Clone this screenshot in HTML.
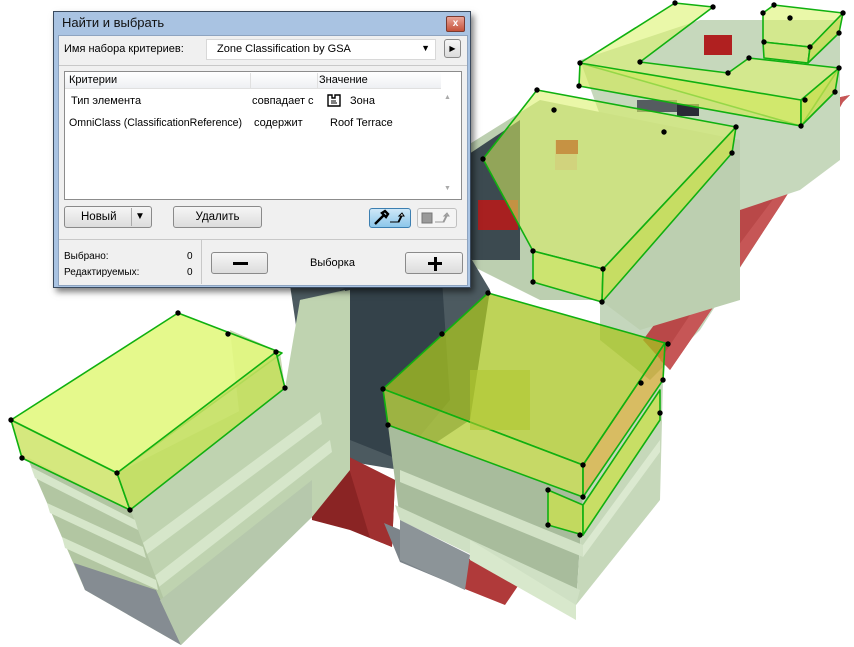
<!DOCTYPE html>
<html><head><meta charset="utf-8">
<style>
html,body{margin:0;padding:0;background:#fff;}
body{width:854px;height:647px;position:relative;overflow:hidden;font-family:"Liberation Sans",sans-serif;}
svg.scene{position:absolute;left:0;top:0;}
.dlg{position:absolute;left:53px;top:11px;width:418px;height:277px;background:#a9c3e2;border:1px solid #3a4a5e;box-shadow:3px 4px 6px rgba(0,0,0,.5);box-sizing:border-box;}
.title{position:absolute;left:8px;top:3px;font-size:13px;color:#111;}
.xbtn{position:absolute;right:5px;top:4px;width:17px;height:14px;background:linear-gradient(#e9a598,#c5523a);border:1px solid #7a3a30;border-radius:2px;color:#fff;font-size:10px;text-align:center;line-height:13px;font-weight:bold;}
.client{position:absolute;left:4px;top:23px;width:408px;height:249px;background:#f0f0f0;border:1px solid #8ea4c0;font-size:11px;color:#000;}
.abs{position:absolute;}
.btn{position:absolute;background:linear-gradient(#f6f6f6,#dcdcdc);border:1px solid #8a8a8a;border-radius:3px;box-sizing:border-box;text-align:center;font-size:11.5px;}
.dot{fill:#000;}
</style></head><body>
<svg class="scene" width="854" height="647" viewBox="0 0 854 647">
<!-- right extension: light green stacks + red strip -->
<polygon points="600,300 800,110 830,100 840,110 790,190 700,330 650,380 600,340" fill="#c4d6bc"/>
<polygon points="740,180 830,110 820,150 760,210" fill="#d6c4b4" opacity="0.8"/>
<polygon points="827,100 850,95 843,102 817,147 782,203 727,287 670,370 643,340 687,280 727,207" fill="#b94848"/>
<polygon points="827,100 850,95 843,102 817,147 782,203 727,287 670,370 660,360 720,270 780,190" fill="#c65656"/>
<rect x="687" y="262" width="38" height="28" fill="#a01818"/>
<!-- upper right cluster base -->
<polygon points="580,60 700,20 840,20 840,160 800,190 740,210 620,170" fill="#c6d8bc"/>
<rect x="704" y="35" width="28" height="20" fill="#b02020"/>
<rect x="637" y="100" width="40" height="12" fill="#555c60"/>
<rect x="677" y="104" width="22" height="12" fill="#2a2a36"/>
<!-- middle region behind long box -->
<polygon points="460,150 540,100 740,140 740,300 640,330 600,300 540,300 460,260" fill="#bccfb0"/>
<polygon points="460,160 520,120 520,260 460,260" fill="#3c4a50"/>
<rect x="555" y="140" width="22" height="30" fill="#c8b0a0"/>
<rect x="556" y="140" width="22" height="14" fill="#b02020"/>
<rect x="478" y="200" width="40" height="30" fill="#a82020"/>
<!-- dark core -->
<polygon points="290,285 460,240 490,290 470,420 440,440 400,470 340,460 310,420" fill="#4c5a60"/>
<polygon points="340,290 440,250 450,400 400,460 350,440" fill="#34424a"/>
<polygon points="300,300 345,290 350,470 312,517 290,500" fill="#aabfa0"/>
<!-- red lower strip + gray -->
<polygon points="310,485 345,455 395,480 392,547 350,530 312,520" fill="#8a2424"/>
<polygon points="345,455 395,480 392,547 370,538" fill="#a03030"/>
<polygon points="384,523 455,553 455,585 400,562" fill="#7c848a"/>
<polygon points="455,553 522,580 505,605 455,585" fill="#b03a3a"/>
<!-- right body under central box -->
<polygon points="388,425 583,497 576,605 400,520" fill="#a8bc9c"/>
<polygon points="583,497 663,380 660,500 576,605" fill="#c6d8ba"/>
<polygon points="400,470 583,545 583,557 400,482" fill="#d2e2c6"/>
<polygon points="395,505 580,590 576,605 400,520" fill="#cfe0c4"/>
<polygon points="583,545 660,440 660,452 583,557" fill="#dbe9d0"/>
<polygon points="400,520 470,555 465,590 400,560" fill="#8c9498"/>
<polygon points="470,540 576,605 576,620 470,560" fill="#d8e8cc"/>
<!-- left wing body -->
<polygon points="117,473 285,388 300,300 350,290 350,470 312,517 181,645 130,510" fill="#bfd3b0"/>
<polygon points="140,545 320,412 322,424 143,557" fill="#d6e6ca"/>
<polygon points="152,578 330,440 332,452 155,590" fill="#d6e6ca"/>
<polygon points="27,457 131,511 181,645 85,590" fill="#b2c6a2"/>
<polygon points="31,467 135,520 138,530 35,478" fill="#d6e6ca"/>
<polygon points="47,503 143,547 146,558 50,513" fill="#d6e6ca"/>
<polygon points="62,537 156,580 158,590 65,548" fill="#d6e6ca"/>
<polygon points="74,563 156,590 181,645 85,590" fill="#858c92"/>
<polygon points="160,600 312,480 312,517 181,645" fill="#b6c8ac"/>
<polygon points="230,330 280,352 285,388 240,420" fill="#c8d8b0"/>
<!-- left yellow box -->
<g stroke="#10b010" stroke-width="1.6" stroke-linejoin="round">
<polygon points="11,420 178,313 282,353 117,473" fill="#e2f880" fill-opacity="0.9"/>
<polygon points="11,420 117,473 130,510 22,458" fill="#d0e670" fill-opacity="0.9"/>
<polygon points="117,473 276,352 285,388 130,510" fill="#c4e060" fill-opacity="0.9"/>
</g>
<!-- central yellow box -->
<g stroke="#10b010" stroke-width="1.6" stroke-linejoin="round">
<polygon points="383,389 488,293 665,343 583,465" fill="#a8c420" fill-opacity="0.75"/>
<polygon points="383,389 583,465 583,497 388,425" fill="#b8d040" fill-opacity="0.8"/>
<polygon points="583,465 665,343 663,380 583,497" fill="#c8a020" fill-opacity="0.7"/>
<polygon points="548,490 583,505 583,535 548,525" fill="#c8e050" fill-opacity="0.8"/>
<polygon points="583,505 660,390 660,420 583,535" fill="#c8e050" fill-opacity="0.8"/>
</g>
<rect x="470" y="370" width="60" height="60" fill="#b0c830" opacity="0.6"/>
<!-- middle long box -->
<g stroke="#10b010" stroke-width="1.6" stroke-linejoin="round">
<polygon points="537,90 736,127 603,269 533,251 483,159" fill="#d8f060" fill-opacity="0.55"/>
<polygon points="533,251 603,269 602,302 533,282" fill="#d0e860" fill-opacity="0.8"/>
<polygon points="603,269 736,127 732,153 602,302" fill="#c8e050" fill-opacity="0.8"/>
</g>
<!-- upper boxes -->
<g stroke="#10b010" stroke-width="1.6" stroke-linejoin="round">
<polygon points="580,63 675,3 713,7 640,62 728,73 749,58 839,68 801,126" fill="#dcf470" fill-opacity="0.6"/>
<polygon points="580,63 579,86 801,126 801,100" fill="#d0e860" fill-opacity="0.7"/>
<polygon points="801,100 839,68 835,92 801,126" fill="#c8e050" fill-opacity="0.8"/>
<polygon points="763,13 774,5 843,13 810,47 763,42" fill="#dcf470" fill-opacity="0.6"/>
<polygon points="763,42 810,47 808,63 764,58" fill="#d0e860" fill-opacity="0.7"/>
<polygon points="810,47 843,13 839,33 808,63" fill="#c8e050" fill-opacity="0.8"/>
</g>
<g class="dot">
<circle cx="11" cy="420" r="2.7"/><circle cx="22" cy="458" r="2.7"/><circle cx="178" cy="313" r="2.7"/><circle cx="117" cy="473" r="2.7"/><circle cx="130" cy="510" r="2.7"/><circle cx="228" cy="334" r="2.7"/><circle cx="276" cy="352" r="2.7"/><circle cx="285" cy="388" r="2.7"/>
<circle cx="383" cy="389" r="2.7"/><circle cx="388" cy="425" r="2.7"/><circle cx="442" cy="334" r="2.7"/><circle cx="488" cy="293" r="2.7"/><circle cx="668" cy="344" r="2.7"/><circle cx="583" cy="465" r="2.7"/><circle cx="583" cy="497" r="2.7"/><circle cx="548" cy="490" r="2.7"/><circle cx="548" cy="525" r="2.7"/><circle cx="580" cy="535" r="2.7"/><circle cx="663" cy="380" r="2.7"/><circle cx="660" cy="413" r="2.7"/><circle cx="641" cy="383" r="2.7"/>
<circle cx="537" cy="90" r="2.7"/><circle cx="554" cy="110" r="2.7"/><circle cx="664" cy="132" r="2.7"/><circle cx="736" cy="127" r="2.7"/><circle cx="732" cy="153" r="2.7"/><circle cx="603" cy="269" r="2.7"/><circle cx="602" cy="302" r="2.7"/><circle cx="533" cy="251" r="2.7"/><circle cx="533" cy="282" r="2.7"/><circle cx="483" cy="159" r="2.7"/>
<circle cx="580" cy="63" r="2.7"/><circle cx="579" cy="86" r="2.7"/><circle cx="675" cy="3" r="2.7"/><circle cx="713" cy="7" r="2.7"/><circle cx="640" cy="62" r="2.7"/><circle cx="728" cy="73" r="2.7"/><circle cx="749" cy="58" r="2.7"/><circle cx="839" cy="68" r="2.7"/><circle cx="835" cy="92" r="2.7"/><circle cx="801" cy="126" r="2.7"/><circle cx="805" cy="100" r="2.7"/>
<circle cx="774" cy="5" r="2.7"/><circle cx="763" cy="13" r="2.7"/><circle cx="843" cy="13" r="2.7"/><circle cx="839" cy="33" r="2.7"/><circle cx="790" cy="18" r="2.7"/><circle cx="764" cy="42" r="2.7"/><circle cx="810" cy="47" r="2.7"/>
</g>
</svg>

<div class="dlg">
 <div class="title">Найти и выбрать</div>
 <div class="xbtn">x</div>
 <div class="client">
  <div class="abs" style="left:5px;top:7px;">Имя набора критериев:</div>
  <div class="abs" style="left:147px;top:3px;width:228px;height:19px;background:#fff;border:1px solid #d8d8d8;"><span class="abs" style="left:10px;top:3px;">Zone Classification by GSA</span><span class="abs" style="right:5px;top:3px;font-size:9px;">▼</span></div>
  <div class="btn" style="left:385px;top:3px;width:17px;height:19px;font-size:8px;line-height:17px;">▶</div>
  <div class="abs" style="left:0;top:29px;width:408px;border-top:1px solid #c8c8c8;"></div>
  <div class="abs" style="left:5px;top:35px;width:396px;height:127px;background:#fff;border:1px solid #8c8c8c;">
   <div class="abs" style="left:0;top:0;width:376px;height:16px;background:linear-gradient(#fff,#eef0f3);border-bottom:1px solid #e0e0e0;"></div>
   <div class="abs" style="left:185px;top:1px;height:15px;border-left:1px solid #e0e0e0;"></div>
   <div class="abs" style="left:252px;top:1px;height:15px;border-left:1px solid #e0e0e0;"></div>
   <div class="abs" style="left:4px;top:2px;">Критерии</div>
   <div class="abs" style="left:254px;top:2px;">Значение</div>
   <div class="abs" style="left:6px;top:23px;">Тип элемента</div>
   <div class="abs" style="left:187px;top:23px;">совпадает с</div>
   <svg class="abs" style="left:262px;top:22px;" width="14" height="13" viewBox="0 0 14 13"><path d="M1 1h4v3h3V1h5v11H1z" fill="none" stroke="#000" stroke-width="1.4"/><path d="M4 7h5M4 9h6" stroke="#000"/></svg>
   <div class="abs" style="left:285px;top:23px;">Зона</div>
   <div class="abs" style="left:4px;top:45px;font-size:10.6px;">OmniClass (ClassificationReference)</div>
   <div class="abs" style="left:189px;top:45px;">содержит</div>
   <div class="abs" style="left:265px;top:45px;">Roof Terrace</div>
   <div class="abs" style="left:379px;top:22px;color:#aaa;font-size:7px;">▲</div>
   <div class="abs" style="left:379px;top:113px;color:#aaa;font-size:7px;">▼</div>
  </div>
  <div class="btn" style="left:5px;top:170px;width:88px;height:22px;line-height:20px;"><span style="position:absolute;left:16px;">Новый</span><span style="position:absolute;left:66px;top:1px;height:18px;border-left:1px solid #aaa;"></span><span style="position:absolute;left:70px;font-size:10px;">▼</span></div>
  <div class="btn" style="left:114px;top:170px;width:89px;height:22px;line-height:20px;">Удалить</div>
  <div class="btn" style="left:310px;top:172px;width:42px;height:20px;background:linear-gradient(#cfe8f8,#8cc6ea);border-color:#3c7fb1;"><svg width="40" height="18" viewBox="0 0 40 18"><path d="M5 15l9-9M12 4l3-2 3 3-2 3z" stroke="#000" stroke-width="2.4" fill="none"/><path d="M20 13h8l3-6h-2l3-3 2 3h-2l-3 6z" fill="#fff" stroke="#000"/></svg></div>
  <div class="btn" style="left:358px;top:172px;width:40px;height:20px;background:#f4f4f4;border-color:#c0c0c0;"><svg width="38" height="18" viewBox="0 0 38 18"><rect x="4" y="4" width="10" height="10" fill="#9a9a9a" stroke="#777"/><path d="M17 13h8l3-6h-2l3-3 2 3h-2l-3 6z" fill="#aaa" stroke="#999"/></svg></div>
  <div class="abs" style="left:0;top:203px;width:408px;border-top:1px solid #c8c8c8;"></div>
  <div class="abs" style="left:142px;top:204px;height:44px;border-left:1px solid #c8c8c8;"></div>
  <div class="abs" style="left:5px;top:215px;font-size:10px;">Выбрано:</div>
  <div class="abs" style="left:5px;top:231px;font-size:10px;">Редактируемых:</div>
  <div class="abs" style="left:128px;top:215px;font-size:10px;">0</div>
  <div class="abs" style="left:128px;top:231px;font-size:10px;">0</div>
  <div class="btn" style="left:152px;top:216px;width:57px;height:22px;"><div style="position:absolute;left:21px;top:9px;width:15px;height:3px;background:#000;"></div></div>
  <div class="abs" style="left:251px;top:221px;">Выборка</div>
  <div class="btn" style="left:346px;top:216px;width:58px;height:22px;"><div style="position:absolute;left:22px;top:9px;width:14px;height:3px;background:#000;"></div><div style="position:absolute;left:27.5px;top:3.5px;width:3px;height:14px;background:#000;"></div></div>
 </div>
</div>
</body></html>
